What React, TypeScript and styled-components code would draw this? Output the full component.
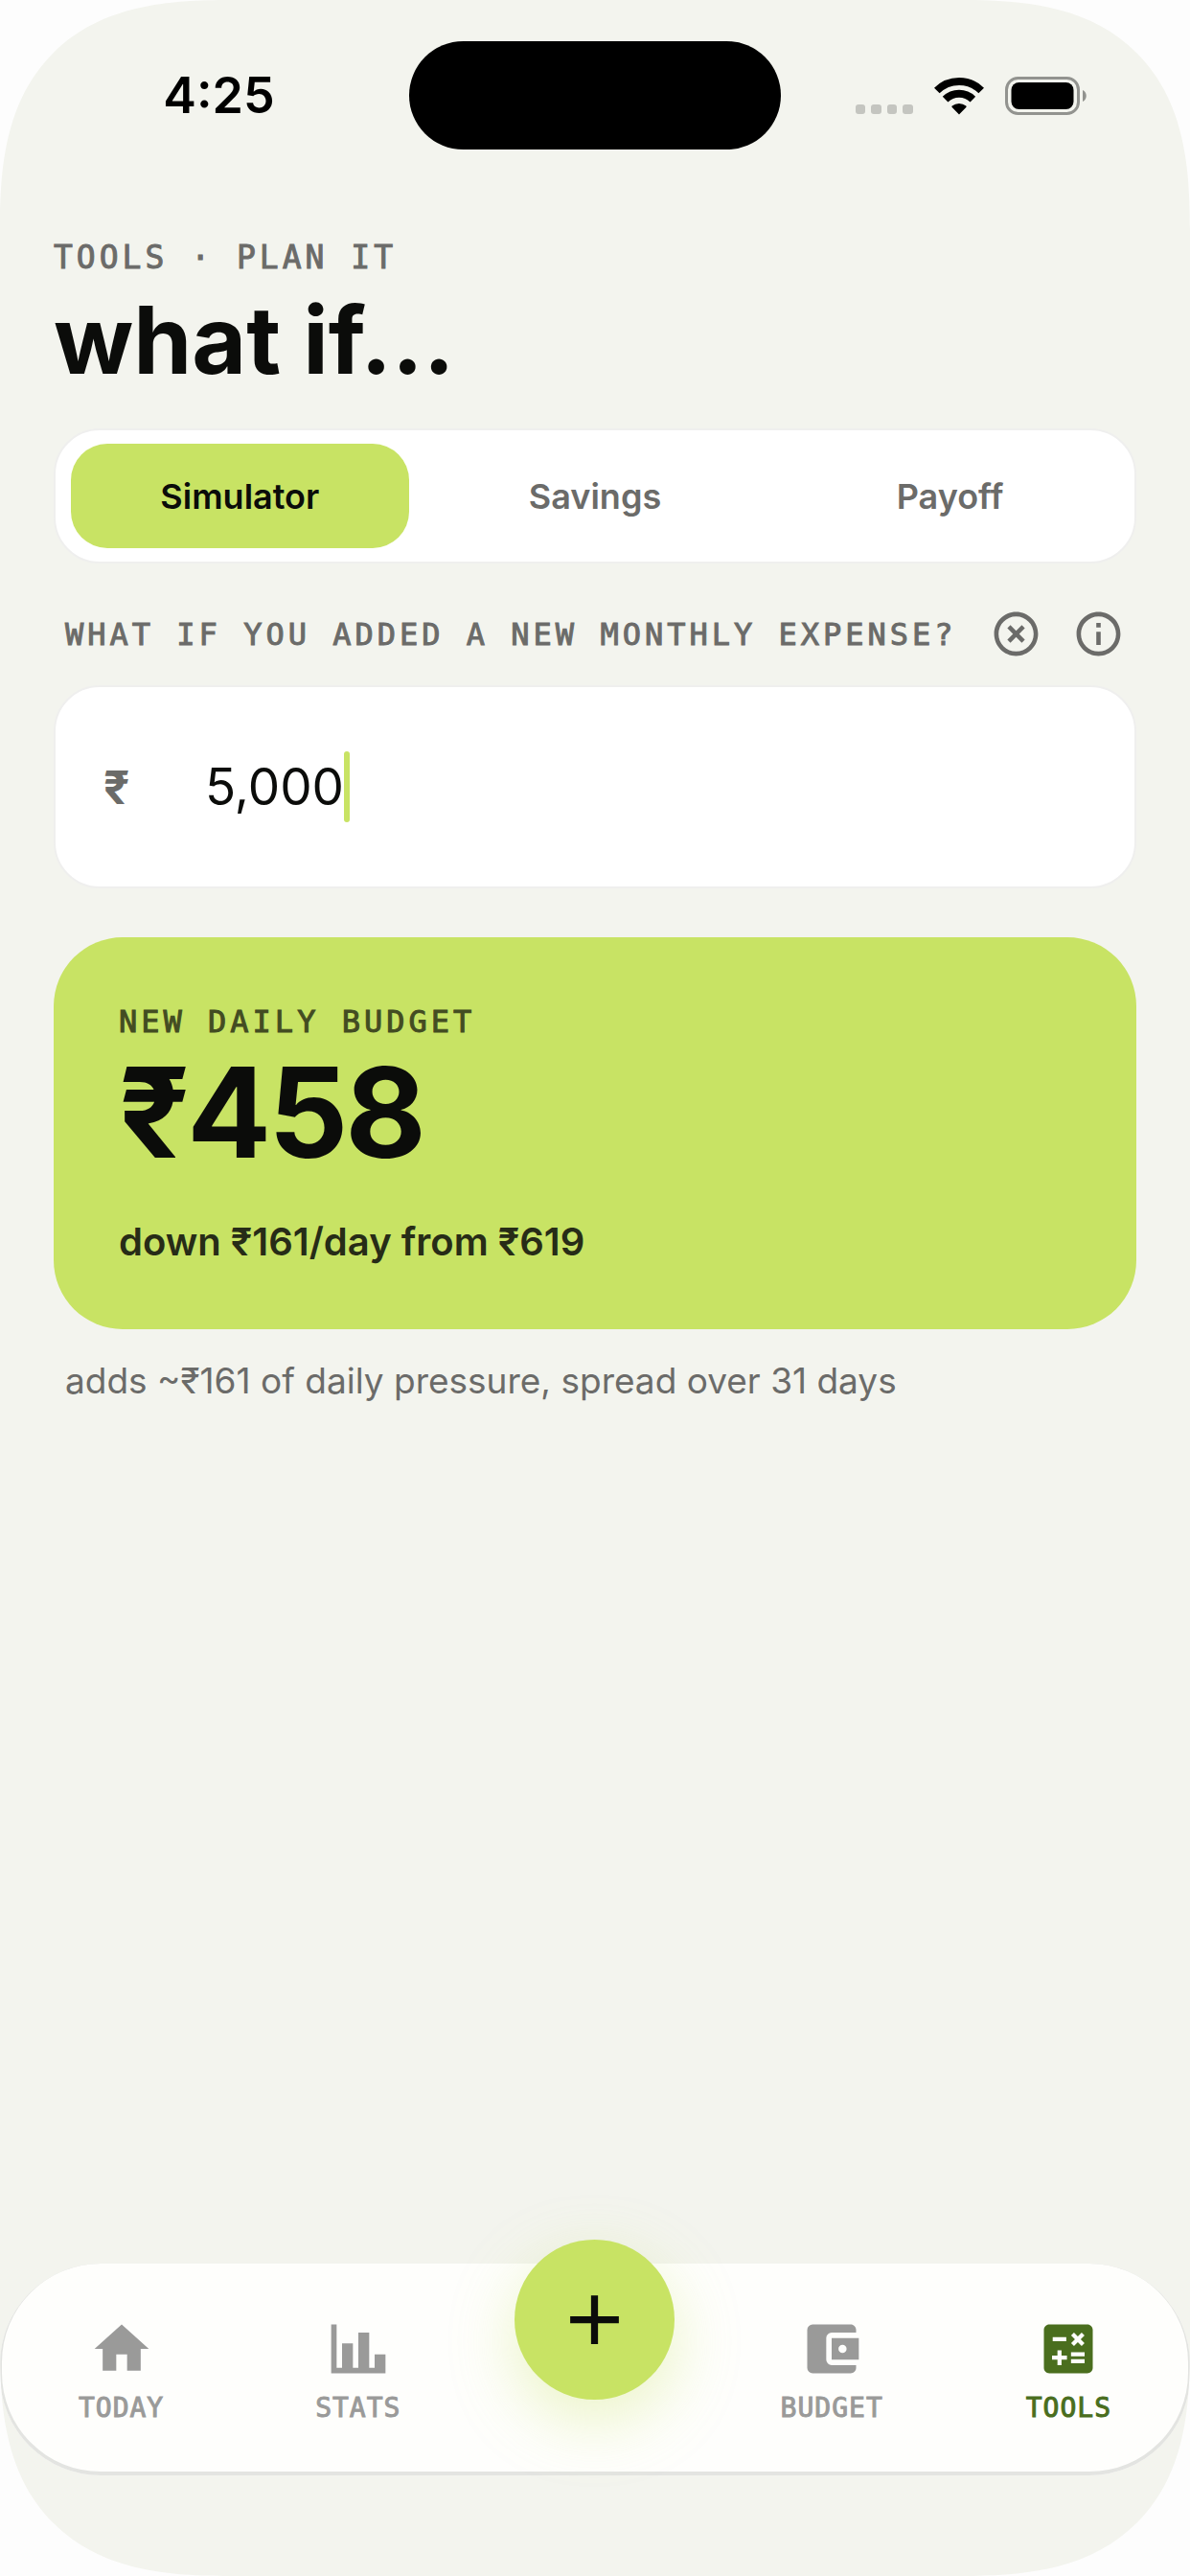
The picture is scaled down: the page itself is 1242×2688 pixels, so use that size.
import { useState } from "react";
import styled, { createGlobalStyle } from "styled-components";
import {
  MdAccountBalanceWallet,
  MdAdd,
  MdCalculate,
  MdHighlightOff,
  MdInfoOutline,
} from "react-icons/md";

const GlobalStyle = createGlobalStyle`
  :root {
    --bg: #f3f4ee;
    --lime: #c8e364;
    --ink: #0b0c0a;
    --muted: #6b6b69;
    --faint: #9a9a99;
    --forest: #4a6e1e;
    --font-main: Inter, "Noto Sans", sans-serif;
    --font-mono: "DejaVu Sans Mono", monospace;
  }
  *, *::before, *::after {
    box-sizing: border-box;
  }
  body {
    margin: 0;
    background: #fdfdfd;
    color: var(--ink);
    font-family: var(--font-main);
  }
  button, input {
    font: inherit;
    color: inherit;
    background: none;
    border: 0;
    padding: 0;
    margin: 0;
  }
  button {
    cursor: pointer;
  }
`;

const Screen = styled.div`
  min-height: 100vh;
  display: flex;
  flex-direction: column;
  background: var(--bg);
  border-radius: 195px;
  overflow: hidden;
  @supports (corner-shape: squircle) {
    border-radius: 240px;
    corner-shape: superellipse(1.4);
  }
`;

const StatusBar = styled.header`
  display: grid;
  grid-template-columns: 1fr 388px 1fr;
  align-items: center;
  padding: 43px 30px 0;
`;
const Island = styled.div`
  height: 113px;
  border-radius: 57px;
  background: #000;
`;
const Time = styled.time`
  text-align: center;
  font-size: 52px;
  font-weight: 600;
  color: #000;
`;
const Indicators = styled.div`
  display: flex;
  align-items: center;
  justify-content: center;
  gap: 22px;
`;

const Content = styled.main`
  display: flex;
  flex-direction: column;
  padding: 91px 56px 0;
`;
const Overline = styled.p`
  margin: 0;
  font-family: var(--font-mono);
  font-size: 33px;
  line-height: 44px;
  letter-spacing: 4px;
  -webkit-text-stroke: 1px currentColor;
  color: var(--muted);
`;
const Title = styled.h1`
  margin: 16px 0 44px;
  font-size: 98px;
  line-height: 96px;
  font-weight: 700;
`;

const Tabs = styled.div`
  display: grid;
  grid-template-columns: repeat(3, 1fr);
  gap: 18px;
  padding: 14px 16px;
  background: #fff;
  border: 2px solid #efefee;
  border-radius: 48px;
`;
const Tab = styled.button<{ $active: boolean }>`
  height: 109px;
  border-radius: 38px;
  font-size: 36px;
  font-weight: 600;
  background: ${({ $active }) => ($active ? "var(--lime)" : "transparent")};
  color: ${({ $active }) => ($active ? "var(--ink)" : "var(--muted)")};
`;

const Question = styled.div`
  display: flex;
  align-items: center;
  gap: 31px;
  padding: 46px 12px 26px;
  color: var(--muted);
`;
const Label = styled.label`
  flex: 1;
  white-space: nowrap;
  font-family: var(--font-mono);
  font-size: 32px;
  line-height: 44px;
  letter-spacing: 4px;
  -webkit-text-stroke: 1px currentColor;
`;
const IconButton = styled.button`
  display: flex;
  font-size: 55px;
`;

const AmountField = styled.div`
  display: flex;
  align-items: center;
  height: 212px;
  padding: 0 50px;
  background: #fff;
  border: 2px solid #efefee;
  border-radius: 48px;
`;
const Currency = styled.span`
  width: 106px;
  font-size: 48px;
  font-weight: 700;
  color: var(--muted);
`;
const AmountInput = styled.input`
  field-sizing: content;
  max-width: 100%;
  font-size: 53px;
  line-height: 72px;
  outline: none;
  caret-color: transparent;
`;
const Caret = styled.span`
  width: 6px;
  height: 74px;
  border-radius: 3px;
  background: var(--lime);
`;

const Result = styled.section`
  margin-top: 51px;
  padding: 66px 68px 67px;
  background: var(--lime);
  border-radius: 72px;
`;
const ResultLabel = styled(Overline)`
  font-size: 32px;
  color: #434c22;
`;
const ResultValue = styled.p`
  margin: 8px 0 46px;
  font-size: 130px;
  line-height: 130px;
  font-weight: 700;
  letter-spacing: -3px;
`;
const ResultChange = styled.p`
  margin: 0;
  font-size: 40px;
  line-height: 48px;
  font-weight: 600;
  color: #272c17;
`;
const Note = styled.p`
  margin: 30px 12px 0;
  font-size: 37px;
  line-height: 48px;
  color: var(--muted);
`;

const NavBar = styled.nav`
  display: grid;
  grid-template-columns: repeat(5, 1fr);
  margin: auto 0 105px;
  padding: 3px;
  background: #fefefc;
  box-shadow: inset 0 -2px 0 2px #e3e4e1;
  border-radius: 105px;
`;
const NavItem = styled.a<{ $active?: boolean }>`
  display: flex;
  flex-direction: column;
  align-items: center;
  gap: 10px;
  padding: 52px 0 49px;
  text-decoration: none;
  color: ${({ $active }) => ($active ? "var(--forest)" : "var(--faint)")};

  svg {
    width: 68px;
    height: 68px;
  }
`;
const NavLabel = styled.span`
  font-family: var(--font-mono);
  font-size: 28px;
  line-height: 36px;
  letter-spacing: 1px;
  -webkit-text-stroke: 1px currentColor;
`;
const AddButton = styled.button`
  display: flex;
  align-items: center;
  justify-content: center;
  justify-self: center;
  width: 167px;
  height: 167px;
  margin-top: -28px;
  border-radius: 50%;
  background: var(--lime);
  box-shadow: 0 22px 66px rgba(200, 227, 100, 0.35);
  font-size: 87px;
`;

const HomeIcon = () => (
  <svg viewBox="0 0 24 24" fill="currentColor" aria-hidden="true">
    <path d="M10 20v-6h4v6h5v-8h3L12 3 2 12h3v8z" />
  </svg>
);

const ChartIcon = () => (
  <svg viewBox="0 0 24 24" fill="currentColor" aria-hidden="true">
    <path d="M22 21H2V3h2v16h2v-9h4v9h2V6h4v13h2v-5h4z" />
  </svg>
);

const SignalIcon = () => (
  <svg width="60" height="40" viewBox="0 0 60 40" fill="#c4c5c0" aria-hidden="true">
    <rect x="0" y="29" width="10" height="10" rx="3" />
    <rect x="16" y="29" width="11" height="10" rx="3" />
    <rect x="33" y="29" width="10" height="10" rx="3" />
    <rect x="49" y="29" width="11" height="10" rx="3" />
  </svg>
);

const WifiIcon = () => (
  <svg width="52" height="40" viewBox="0 0 52 40" aria-hidden="true">
    <g fill="none" stroke="#000" strokeWidth="8">
      <path d="M2.800 14.500A33 33 0 0 1 49.200 14.500" />
      <path d="M11.600 23.700A20.500 20.500 0 0 1 40.400 23.700" />
    </g>
    <path d="M26 39.500l-7.300-7.400a1 1 0 0 1 0-1.500a11.500 11.500 0 0 1 14.600 0a1 1 0 0 1 0 1.500z" />
  </svg>
);

const BatteryIcon = () => (
  <svg width="86" height="40" viewBox="0 0 86 40" aria-hidden="true">
    <rect x="1.500" y="1.500" width="75" height="37" rx="12" fill="none" stroke="#92938f" strokeWidth="3" />
    <rect x="6.500" y="6" width="65" height="28" rx="8" />
    <path d="M81 14c5 2 5 10 0 12z" fill="#92938f" />
  </svg>
);

const tabs = ["Simulator", "Savings", "Payoff"];

export default function App() {
  const [tab, setTab] = useState("Simulator");
  const [amount, setAmount] = useState("5,000");

  return (
    <>
      <GlobalStyle />
      <Screen>
        <StatusBar>
          <Time>4:25</Time>
          <Island />
          <Indicators>
            <SignalIcon />
            <WifiIcon />
            <BatteryIcon />
          </Indicators>
        </StatusBar>

        <Content>
          <Overline>TOOLS · PLAN IT</Overline>
          <Title>what if...</Title>

          <Tabs role="tablist">
            {tabs.map((name) => (
              <Tab
                key={name}
                role="tab"
                aria-selected={name === tab}
                $active={name === tab}
                onClick={() => setTab(name)}
              >
                {name}
              </Tab>
            ))}
          </Tabs>

          <Question>
            <Label htmlFor="expense">WHAT IF YOU ADDED A NEW MONTHLY EXPENSE?</Label>
            <IconButton aria-label="Clear" onClick={() => setAmount("")}>
              <MdHighlightOff />
            </IconButton>
            <IconButton aria-label="Info">
              <MdInfoOutline />
            </IconButton>
          </Question>

          <AmountField>
            <Currency>₹</Currency>
            <AmountInput
              id="expense"
              inputMode="numeric"
              value={amount}
              onChange={(e) => setAmount(e.target.value)}
            />
            <Caret />
          </AmountField>

          <Result>
            <ResultLabel>NEW DAILY BUDGET</ResultLabel>
            <ResultValue>₹458</ResultValue>
            <ResultChange>down ₹161/day from ₹619</ResultChange>
          </Result>
          <Note>adds ~₹161 of daily pressure, spread over 31 days</Note>
        </Content>

        <NavBar>
          <NavItem href="#today">
            <HomeIcon />
            <NavLabel>TODAY</NavLabel>
          </NavItem>
          <NavItem href="#stats">
            <ChartIcon />
            <NavLabel>STATS</NavLabel>
          </NavItem>
          <AddButton aria-label="Add">
            <MdAdd />
          </AddButton>
          <NavItem href="#budget">
            <MdAccountBalanceWallet />
            <NavLabel>BUDGET</NavLabel>
          </NavItem>
          <NavItem href="#tools" $active>
            <MdCalculate />
            <NavLabel>TOOLS</NavLabel>
          </NavItem>
        </NavBar>
      </Screen>
    </>
  );
}
